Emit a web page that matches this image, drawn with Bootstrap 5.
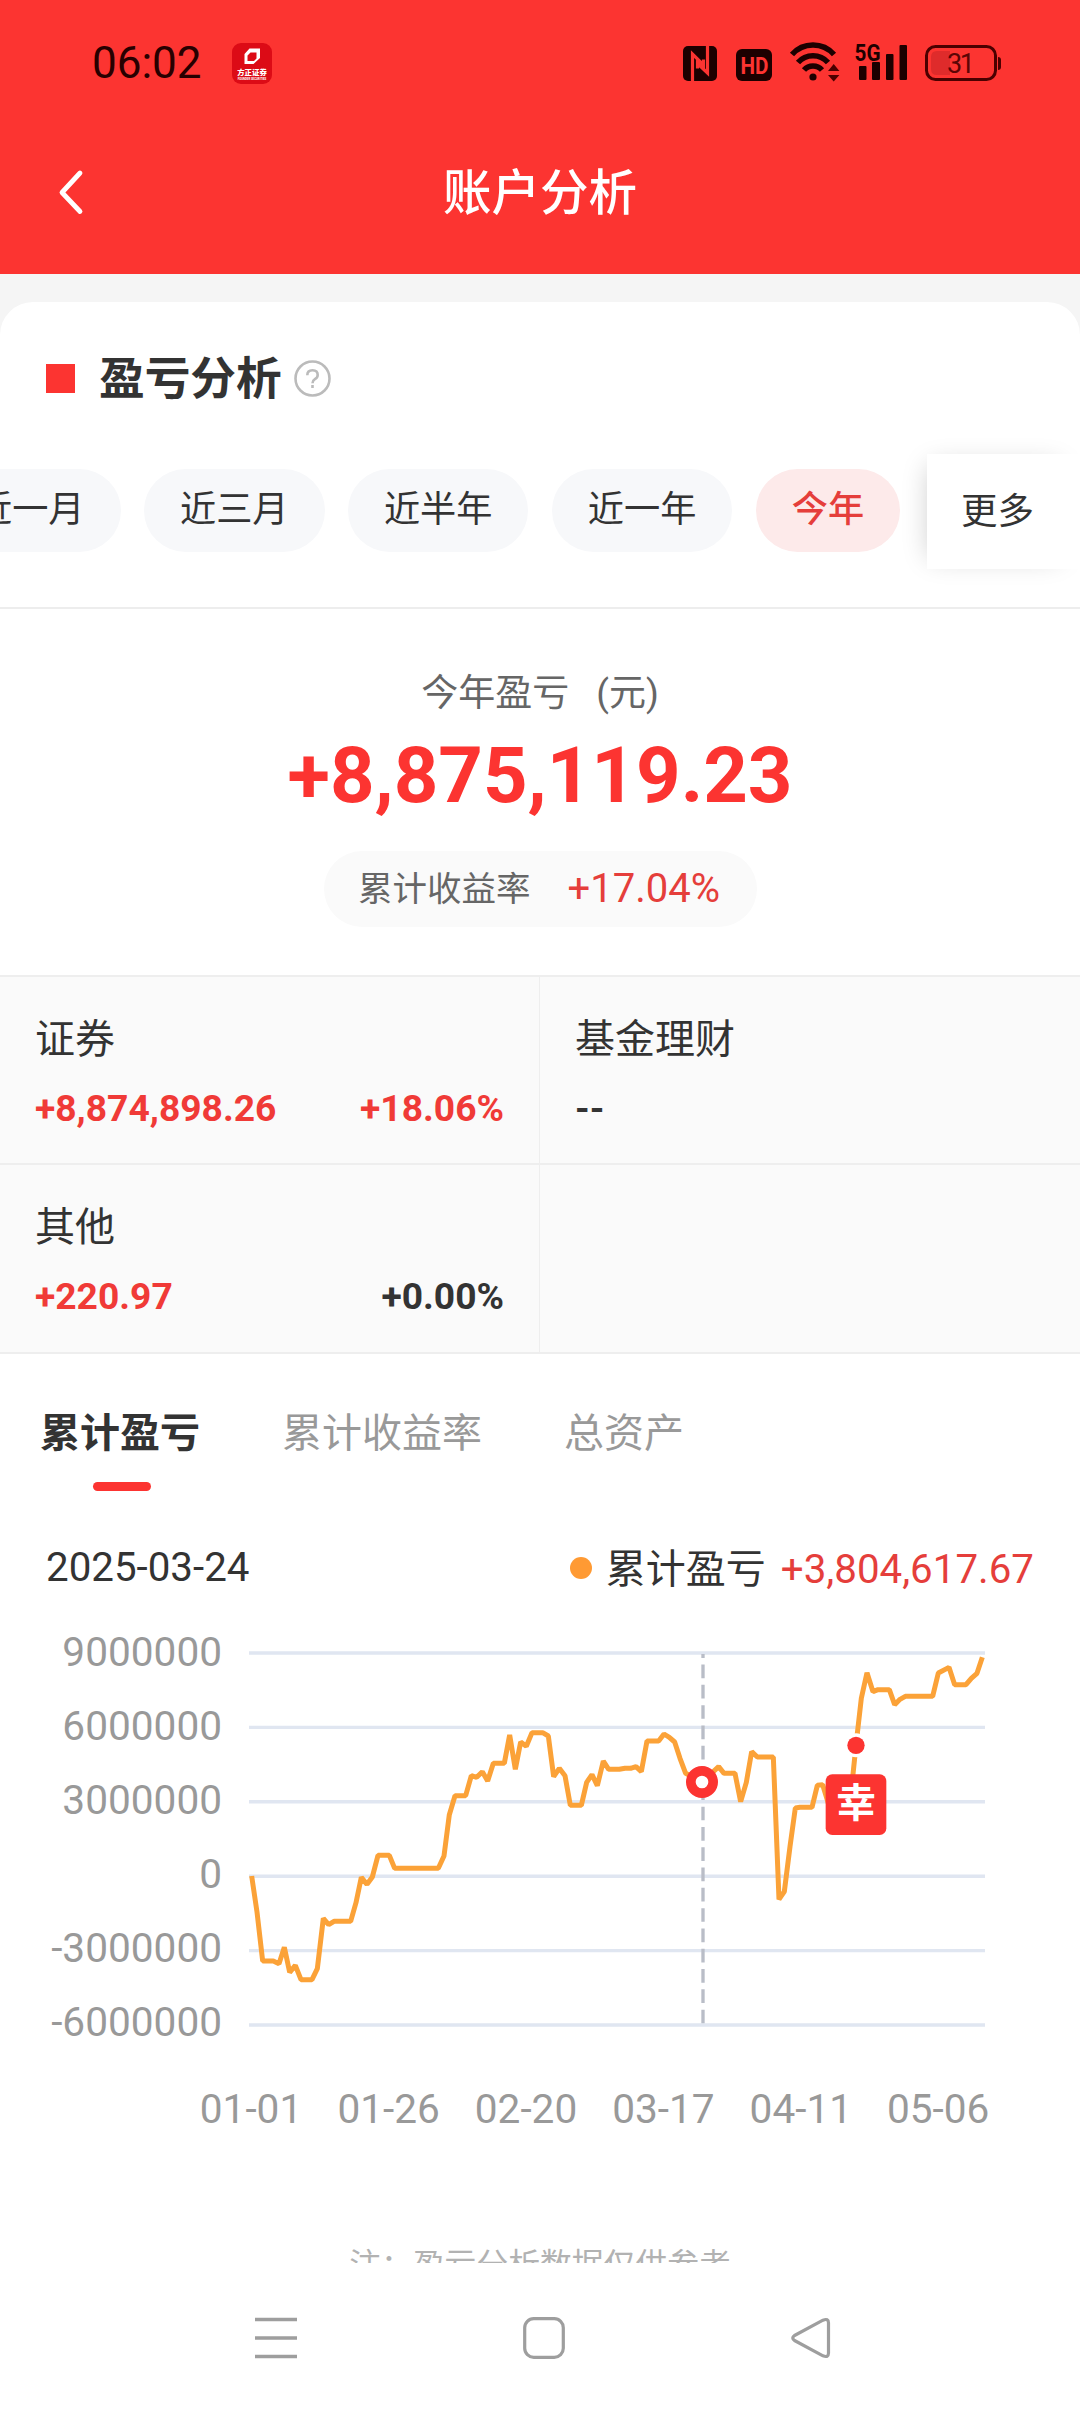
<!DOCTYPE html>
<html lang="zh-CN">
<head>
<meta charset="utf-8">
<meta name="viewport" content="width=device-width, initial-scale=1">
<title>账户分析</title>
<link href="https://cdn.jsdelivr.net/npm/bootstrap@5.3.0/dist/css/bootstrap.min.css" rel="stylesheet">
<style>
  :root { --brand: #fc3431; --rise: #e53e3b; --ink: #333; }
  body { width: 1080px; height: 2412px; overflow: hidden; background: #f5f5f5; color: var(--ink);
    font-family: Roboto, "Noto Sans CJK SC", sans-serif; font-size: 40px; line-height: 50px; }
  svg { display: block; flex: none; overflow: visible; }
  svg text { font-family: Roboto, "Noto Sans CJK SC", sans-serif; }
  .app-head { height: 274px; background: var(--brand); }
  .status-row { height: 126px; padding: 0 79px 0 92px; color: #280000; }
  .clock { font-size: 44px; width: 140px; }
  .title-row { height: 132px; padding: 0 58px; font-size: 48.5px; }
  .title-row .side { width: 26px; }
  .title-row .caption-text { padding-top: 3px; }
  .sheet { margin-top: 28px; border-radius: 33px 33px 0 0; background: #fff; height: 2110px; overflow: hidden; }
  .sect-head { height: 152px; padding-left: 46px; }
  .sect-mark { width: 29px; height: 29px; background: var(--brand); margin-right: 24px; }
  .sect-title { font-size: 45.7px; margin-right: 12px; padding-top: 3px; }
  .filter-row { height: 115px; margin-bottom: 38px; }
  .chips { gap: 23.4px; margin-left: -60px; width: 987px; flex: none; padding-bottom: 2px; }
  .chip { height: 83px; line-height: 81px; padding: 0 36px; font-size: 36.2px; background: #f7f8fa; flex: none; border-radius: 42px; }
  .chip.on { background: #fdeaea; color: var(--rise); font-weight: 500; }
  .more { position: relative; line-height: 115px; padding-left: 34px; font-size: 36.5px; background: #fff; box-shadow: -9px 0 26px -12px rgba(0,0,0,.22); }
  .summary { border-top: 2px solid #ededed; padding: 62px 0 48px; }
  .sum-label { font-size: 37px; line-height: 46px; color: #666; gap: 27px; }
  .sum-value { font-size: 77.800px; line-height: 90px; margin-top: 14px; color: var(--brand); }
  .rate { height: 76px; width: 433px; margin: 30px auto 0; border-radius: 38px; background: #fafafa; gap: 37px; font-size: 34.5px; color: #666; padding-right: 2px; }
  .rate b { font-size: 40px; font-weight: 400; color: var(--rise); }
  .cells { background: #fafafa; border-top: 2px solid #eee; }
  .cells > div { height: 188px; padding: 38px 35px 0 35px; border-bottom: 2px solid #eee; }
  .cells > div:nth-child(n+3) { height: 189px; }
  .cells > div:nth-child(odd) { border-right: 1px solid #eee; }
  .cells .figs { margin-top: 21px; font-size: 37.2px; line-height: 44px; font-weight: 700; }
  .up { color: #f03a37; }
  .seg { padding: 55px 0 0 40px; gap: 82px; color: #999; }
  .seg .on { color: var(--ink); font-weight: 700; }
  .seg .on::after { content: ""; display: block; width: 58px; height: 9px; border-radius: 5px; background: var(--brand); margin: 23px auto 0; transform: translateX(2px); }
  .legend-row { height: 52px; margin-top: 50px; padding: 2px 46px 0; font-size: 40.3px; }
  .dot { width: 22px; height: 22px; background: #ff9a33; margin-right: 14px; }
  .legend-row .tag { padding-top: 3px; font-size: 40px; }
  .legend-row .val { color: var(--rise); margin-left: 15px; padding-top: 3px; }
  .foot-note { height: 70px; padding-top: 48px; overflow: hidden; font-size: 31.8px; line-height: 48px; color: #b2b2b2; }
  .sys-nav { height: 149px; padding-left: 255px; gap: 225.5px; background: #fff; }
</style>
</head>
<body>
<header class="app-head text-white">
  <div class="status-row d-flex align-items-center">
    <span class="clock">06:02</span>
    <svg width="40" height="41" viewBox="0 0 40 41"><rect width="40" height="41" rx="9" fill="#dc0b16"/><path d="M17.500 5.500H28V15l-6.500 6H12.500V11z M18.500 9.500l-3 3V18h6.500l2.500-2.500v-6z" fill="#fff" fill-rule="evenodd"/><text x="20" y="32" font-size="7.400" font-weight="900" fill="#fff" text-anchor="middle">方正证券</text><text x="20" y="36.500" font-size="2.800" font-weight="700" fill="#fff" text-anchor="middle">FOUNDER SECURITIES</text></svg>
    <svg class="ms-auto" width="320" height="44" viewBox="681 40 320 44" fill="#1c0000">
      <rect x="683" y="45" width="34" height="35" rx="5"/>
      <path d="M692.500 80V53l11 11V58.500M707.500 45v27l-10-9.500v5" fill="none" stroke="#fc3431" stroke-width="3.200"/>
      <rect x="736" y="48" width="36" height="32" rx="6"/>
      <text x="754.500" y="72.500" font-size="24.500" font-weight="700" fill="#fc3431" text-anchor="middle" textLength="28" lengthAdjust="spacingAndGlyphs">HD</text>
      <g fill="none" stroke="#1c0000" stroke-width="5.600"><path d="M792 53.500a28 28 0 0 1 42 0"/><path d="M798 61.500a20 20 0 0 1 30 0"/><path d="M804 69a12 12 0 0 1 18 0"/></g>
      <circle cx="813" cy="76" r="3.600"/>
      <path d="M828 70l5.700-7 5.700 7zM828 74h11.400l-5.700 6.500z" fill="#4b0000"/>
      <text x="867.500" y="60" font-size="24.500" font-weight="700" text-anchor="middle" textLength="26" lengthAdjust="spacingAndGlyphs">5G</text>
      <rect x="859" y="65" width="7.500" height="14" rx="1"/><rect x="872" y="61" width="8" height="18" rx="1"/><rect x="886" y="53" width="7.500" height="26" rx="1"/><rect x="899.500" y="44" width="7.500" height="35" rx="1"/>
      <path d="M937 50h13v24h-13q-6 0-6-6V56q0-6 6-6z" fill="#df2b2b"/>
      <rect x="926.500" y="45.500" width="69" height="33" rx="9" fill="none" stroke="#4b0000" stroke-width="3"/>
      <path d="M998 56q3 0 3 3v7q0 3-3 3z" fill="#4b0000"/>
      <text x="961" y="72" font-size="27" fill="#5c0505" text-anchor="middle" textLength="28">31</text>
    </svg>
  </div>
  <div class="title-row d-flex align-items-center justify-content-between fw-medium">
    <svg class="side" width="26" height="46" viewBox="0 0 26 46"><path d="M22 4L4 23.500l18 19" fill="none" stroke="#fff" stroke-width="4.800" stroke-linecap="round" stroke-linejoin="round"/></svg>
    <span class="caption-text" style="font-weight:500">账户分析</span>
    <span class="side"></span>
  </div>
</header>

<main class="sheet">
  <div class="sect-head d-flex align-items-center">
    <span class="sect-mark"></span>
    <span class="sect-title fw-bold">盈亏分析</span>
    <svg width="37" height="37" viewBox="0 0 37 37" fill="none" stroke="#bbb" stroke-width="2.600"><circle cx="18.500" cy="18.500" r="17"/><path d="M13.300 15.200q0-5 5.200-5t5.200 4.700q0 2.600-2.800 4.300-2.400 1.500-2.400 4"/><path d="M18.500 25v3"/></svg>
  </div>
  <div class="filter-row d-flex">
    <div class="chips d-flex align-items-center">
      <span class="chip">近一月</span><span class="chip">近三月</span><span class="chip">近半年</span><span class="chip">近一年</span><span class="chip on">今年</span>
    </div>
    <div class="more flex-fill">更多</div>
  </div>

  <section class="summary text-center">
    <div class="sum-label d-flex justify-content-center"><span>今年盈亏</span><span>(元)</span></div>
    <div class="sum-value fw-bold">+8,875,119.23</div>
    <div class="rate d-flex align-items-center justify-content-center"><span>累计收益率</span><b>+17.04%</b></div>
  </section>

  <section class="cells row g-0">
    <div class="col-6"><div>证券</div><div class="figs d-flex justify-content-between up"><span>+8,874,898.26</span><span>+18.06%</span></div></div>
    <div class="col-6"><div>基金理财</div><div class="figs">--</div></div>
    <div class="col-6"><div>其他</div><div class="figs d-flex justify-content-between"><span class="up">+220.97</span><span>+0.00%</span></div></div>
    <div class="col-6"></div>
  </section>

  <nav class="seg d-flex align-items-start"><span class="on">累计盈亏</span><span>累计收益率</span><span>总资产</span></nav>
  <div class="legend-row d-flex align-items-center">
    <span class="me-auto">2025-03-24</span>
    <span class="dot rounded-circle"></span><span class="tag">累计盈亏</span><span class="val">+3,804,617.67</span>
  </div>

  <svg width="1080" height="600" viewBox="0 1593 1080 600">
    <path d="M249 1653H985M249 1727.400H985M249 1801.800H985M249 1876.200H985M249 1950.600H985M249 2025H985" stroke="#e0e6f1" stroke-width="3.400"/>
    <g font-size="40.600" fill="#999" text-anchor="end">
      <text x="222" y="1666">9000000</text><text x="222" y="1739.500">6000000</text><text x="222" y="1813.500">3000000</text><text x="222" y="1887.500">0</text><text x="222" y="1961.500">-3000000</text><text x="222" y="2035.500">-6000000</text>
    </g>
    <g font-size="40.600" fill="#999" text-anchor="middle">
      <text x="251" y="2122.500">01-01</text><text x="388.600" y="2122.500">01-26</text><text x="526" y="2122.500">02-20</text><text x="663.400" y="2122.500">03-17</text><text x="800.800" y="2122.500">04-11</text><text x="938.200" y="2122.500">05-06</text>
    </g>
    <g transform="translate(200 1620) scale(.33333)">
      <polyline fill="none" stroke="#fba238" stroke-width="15" stroke-linejoin="bevel" points="155,768 171,876 188,1023 220,1023 237,1031 253,982 269,1057 286,1036 303,1079 336,1079 352,1046 370,895 386,914 402,904 452,904 468,848 484,772 501,793 517,771 534,706 568,706 584,745 715,745 732,708 748,584 765,527 797,527 814,467 830,472 847,455 863,483 880,430 913,430 929,345 946,448 962,366 979,379 996,338 1028,338 1045,348 1061,470 1078,445 1095,467 1111,556 1144,556 1160,487 1176,464 1192,497 1210,423 1226,448 1258,448 1275,445 1292,445 1308,440 1324,455 1341,363 1376,363 1392,342 1408,352 1424,366 1440,415 1457,460 1506,486 1540,455 1556,440 1572,460 1605,460 1622,545 1639,487 1655,395 1672,411 1720,411 1737,838 1753,815 1770,680 1786,564 1800,562 1836,562 1852,496 1868,494 1885,550 1950,550 1968,376 1984,235 2001,158 2019,215 2034,209 2068,209 2084,254 2100,238 2116,229 2198,229 2215,159 2247,142 2264,194 2298,194 2314,175 2331,160 2347,112"/>
      <path d="M1509 1210V102" stroke="#b9bdc7" stroke-width="10" stroke-dasharray="41 19.900"/>
      <circle cx="1506" cy="486" r="33.500" fill="#fff" stroke="#fc3431" stroke-width="29"/>
      <circle cx="1968" cy="376" r="36" fill="#fff"/><circle cx="1968" cy="376" r="26" fill="#fc3431"/>
      <rect x="1877" y="463" width="182" height="182" rx="20" fill="#fc3431"/>
      <text x="1968" y="592" font-size="119" font-weight="700" fill="#fff" text-anchor="middle">幸</text>
    </g>
  </svg>
  <div class="foot-note text-center">注：盈亏分析数据仅供参考</div>
  <nav class="sys-nav d-flex align-items-center">
    <svg width="42" height="42" viewBox="0 0 42 42"><path d="M0 2.500h42M0 21h42M0 39.500h42" stroke="#9e9e9e" stroke-width="3.500"/></svg>
    <svg width="42" height="42" viewBox="0 0 42 42"><rect x="1.700" y="1.700" width="38.600" height="38.600" rx="9" fill="none" stroke="#9e9e9e" stroke-width="3.200"/></svg>
    <svg width="42" height="42" viewBox="0 0 42 42"><path d="M33 3.200L4.500 18.500Q1 21 4.500 23.500L33 38.800Q38.500 41 38.500 36V6Q38.500 1 33 3.200z" fill="none" stroke="#9e9e9e" stroke-width="3.200" stroke-linejoin="round"/></svg>
  </nav>
</main>
<script src="https://cdn.jsdelivr.net/npm/bootstrap@5.3.0/dist/js/bootstrap.bundle.min.js"></script>
</body>
</html>
